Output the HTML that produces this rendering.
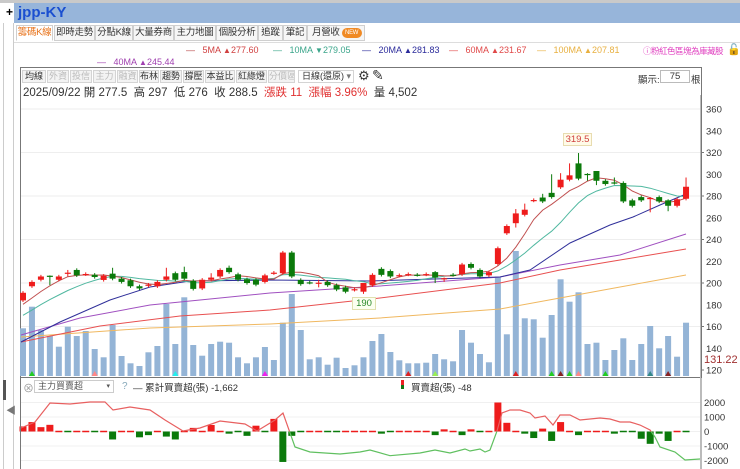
<!DOCTYPE html>
<html><head><meta charset="utf-8">
<style>
*{margin:0;padding:0;box-sizing:border-box}
body{width:740px;height:469px;overflow:hidden;background:#fff;font-family:"Liberation Sans","Noto Sans CJK TC",sans-serif;position:relative;color:#333}
.abs{position:absolute;white-space:nowrap}
.tab{position:absolute;top:25px;height:16px;border:1px solid #cfcfcf;background:#f6f6f6;font-size:9.5px;line-height:14px;color:#333;text-align:center;white-space:nowrap;overflow:hidden;letter-spacing:-0.3px}
.tb{position:absolute;top:70px;height:13px;border:1px solid #d4d4d4;background:#f3f3f3;font-size:9px;line-height:11px;text-align:center;color:#333;white-space:nowrap;overflow:hidden}
.tb.g{color:#bbb}
.leg{position:absolute;font-size:9px;white-space:nowrap}
</style></head><body>
<div class="abs" style="left:0;top:0;width:740px;height:3px;background:#c9c9c9"></div>
<div class="abs" style="left:14px;top:3px;width:726px;height:20px;background:#97b5da"></div>
<div class="abs" style="left:0;top:3px;width:14px;height:20px;background:#fff"></div>
<div class="abs" style="left:6px;top:5px;font-size:12px;font-weight:bold;color:#000">+</div>
<div class="abs" style="left:18px;top:4px;font-size:15px;font-weight:bold;color:#1a4fd0">jpp-KY</div>
<div class="abs" style="left:3px;top:23px;width:1px;height:446px;background:#ccc"></div>
<div class="abs" style="left:13px;top:23px;width:1px;height:446px;background:#ccc"></div>
<div class="abs" style="left:3px;top:380px;width:3px;height:20px;background:#555"></div>
<div class="abs" style="left:6px;top:402px;font-size:10px;color:#777">◀</div>

<div class="tab" style="left:16px;width:37px;background:#fff;color:#e8731a;border-bottom-color:#fff">籌碼K線</div>
<div class="tab" style="left:54px;width:41px">即時走勢</div>
<div class="tab" style="left:95px;width:38px">分點K線</div>
<div class="tab" style="left:133px;width:41px">大量券商</div>
<div class="tab" style="left:174px;width:42px">主力地圖</div>
<div class="tab" style="left:216px;width:42px">個股分析</div>
<div class="tab" style="left:258px;width:25px">追蹤</div>
<div class="tab" style="left:283px;width:24px">筆記</div>
<div class="tab" style="left:307px;width:58px;text-align:left;padding-left:4px">月營收<span style="display:inline-block;margin-left:2px;width:20px;height:10px;border-radius:5px;background:#f08a24;color:#fff;font-size:6px;line-height:10px;text-align:center;vertical-align:1px">NEW</span></div>
<div class="abs" style="left:14px;top:42px;width:726px;height:1px;background:#ddd"></div>

<div class="leg" style="left:186px;top:45px;color:#d04040"><span style="color:#b84a4a">—</span>&nbsp;&nbsp;&nbsp;5MA <span style="font-size:8px">▲</span>277.60</div>
<div class="leg" style="left:273px;top:45px;color:#3aa58a">—&nbsp;&nbsp;&nbsp;10MA <span style="font-size:8px">▼</span>279.05</div>
<div class="leg" style="left:362px;top:45px;color:#2b2b9b">—&nbsp;&nbsp;&nbsp;20MA <span style="font-size:8px">▲</span>281.83</div>
<div class="leg" style="left:449px;top:45px;color:#e04848">—&nbsp;&nbsp;&nbsp;60MA <span style="font-size:8px">▲</span>231.67</div>
<div class="leg" style="left:537px;top:45px;color:#e8b040">—&nbsp;&nbsp;&nbsp;100MA <span style="font-size:8px">▲</span>207.81</div>
<div class="leg" style="left:643px;top:45px;color:#e040c0;font-size:8.5px;letter-spacing:-0.5px">ⓘ粉紅色區塊為庫藏股</div>
<div class="leg" style="left:727px;top:43px;color:#000;font-size:11px">🔓</div>
<div class="leg" style="left:97px;top:57px;color:#a040b0">—&nbsp;&nbsp;&nbsp;40MA <span style="font-size:8px">▲</span>245.44</div>

<div class="abs" style="left:20px;top:67px;width:682px;height:311px;border:1px solid #777;border-bottom:none"></div>
<div class="tb" style="left:22px;width:24px">均線</div>
<div class="tb g" style="left:47px;width:22px">外資</div>
<div class="tb g" style="left:70px;width:22px">投信</div>
<div class="tb g" style="left:93px;width:23px">主力</div>
<div class="tb g" style="left:117px;width:21px">融資</div>
<div class="tb" style="left:139px;width:20px">布林</div>
<div class="tb" style="left:160px;width:22px">趨勢</div>
<div class="tb" style="left:183px;width:21px">撐壓</div>
<div class="tb" style="left:205px;width:30px">本益比</div>
<div class="tb" style="left:236px;width:31px">紅綠燈</div>
<div class="tb g" style="left:268px;width:27px">分價區</div>
<div class="tb" style="left:298px;width:56px;background:#fff;text-align:left;padding-left:3px">日線(還原) <span style="float:right;margin-right:2px;color:#777">▾</span></div>
<div class="abs" style="left:358px;top:68px;font-size:13px;color:#333">⚙</div>
<div class="abs" style="left:372px;top:67px;font-size:14px;color:#333">✎</div>
<div class="abs" style="left:638px;top:72px;font-size:9.5px;color:#333">顯示:</div>
<div class="abs" style="left:660px;top:70px;width:30px;height:13px;border:1px solid #bbb;font-size:9.5px;line-height:11px;text-align:center">75</div>
<div class="abs" style="left:691px;top:72px;font-size:9.5px;color:#333">根</div>
<div class="abs" style="left:23px;top:84px;font-size:11.5px;color:#333">2025/09/22 開 277.5&nbsp; 高 297&nbsp; 低 276&nbsp; 收 288.5&nbsp; <span style="color:#e03030">漲跌 11&nbsp; 漲幅 3.96%</span>&nbsp; 量 4,502</div>

<svg id="s" class="abs" style="left:0;top:0" width="740" height="469"></svg>

<div class="abs" style="left:20px;top:378px;width:1px;height:91px;background:#777"></div>
<div class="abs" style="left:20px;top:377px;width:680px;height:1px;background:#777"></div>
<div class="abs" style="left:23px;top:380px;font-size:11px;color:#999">⊗</div>
<div class="abs" style="left:34px;top:380px;width:80px;height:13px;border:1px solid #ccc;font-size:9px;line-height:11px;padding-left:3px;color:#555">主力買賣超<span style="float:right;margin-right:3px;font-size:7px">▾</span></div>
<div class="abs" style="left:122px;top:381px;font-size:10px;color:#8ab">?</div>
<div class="abs" style="left:133px;top:380px;font-size:9.5px;color:#333">—&nbsp;累計買賣超(張) -1,662</div>
<div class="abs" style="left:401px;top:380px;width:3px;height:5px;background:#e22"></div>
<div class="abs" style="left:401px;top:385px;width:3px;height:4px;background:#171"></div>
<div class="abs" style="left:411px;top:380px;font-size:9.5px;color:#333">買賣超(張) -48</div>

<div class="abs" style="left:563px;top:133px;width:29px;height:13px;background:#fffbe8;border:1px solid #e8dcb0;font-size:9.5px;line-height:11px;text-align:center;color:#d04040">319.5</div>
<div class="abs" style="left:352px;top:297px;width:24px;height:13px;background:#fcfff0;border:1px solid #e0e0b0;font-size:9.5px;line-height:11px;text-align:center;color:#2a8a2a">190</div>

<script>
var s=document.getElementById('s'),h='';
function X(i){return 23+i*8.96}
function Y(p){return 370-(p-120)*1.0875}
var d=[[184,191],[197,201],[203,206],[206.7,206.3,207,198],[203,206],[209,209.5,212,206],[212,207],[208,208.3],[207.6,205.5],[202.8,206.7],[208.6,204,214],[204,201],[202.5,197],[197,195],[197.5,198.5],[197,201],[203,206,214],[209,203],[210,204,215],[202,194.6],[195,203],[203,205,209],[206,212],[214,210,216],[208,203],[203.5,200],[203,198.5],[201,207],[209,209.5],[209,228],[228,206],[202.8,199],[200.6,200.3],[199.8,200.3,203,196],[201,198],[198,194],[196,192],[193.7,194.3],[192,200,200,190],[198,207.5],[213,207.5],[211,206],[206.8,207.2],[207.8,208.2],[207.6,207.4],[207.8,208.2],[210,205,211,200],[204,204.4,205,201],[207.6,207.4],[208,217],[217.5,214],[212,206],[207,210],[217.5,232],[245.7,252.4],[255,264,268,251],[262.7,267.4,273],[275.8,276.3],[278.6,275,282],[282.9,279,300],[288,295,301],[295,299,310],[310,296,319.5],[300.3,299.7,301,294],[303,294,303,290],[294,291],[292.5,292,297],[292,275],[276,271],[279,276],[277.7,278.2,279,265],[279,275],[276,271,277,266],[271,277],[277.5,288.5,297,276]];
var vt=[328.3,306.7,330,336,346.7,326.7,336,331,349,357.3,325,356,363.3,366,352.3,346,304,344,297.3,345,355.7,344,341.7,342.7,357.3,363.3,357.3,347,360,322.7,294,330,359.3,357.3,364.7,357.7,368,365.3,357.3,341,334,352,360.3,363.3,363.3,362.7,354,359.3,361.3,330,342.7,354,362.3,276.7,334.3,251,318.3,319.3,337.7,315,279.3,301.7,292.3,344,342.7,360,350,338.3,360,344,326,348.3,336,356.7,322.7];
[360,320,280,240,200,160].forEach(function(p){h+='<line x1="21" x2="700" y1="'+Y(p)+'" y2="'+Y(p)+'" stroke="#eee"/>'});
for(var p=120;p<=360;p+=20)h+='<text x="706" y="'+(Y(p)+3.5)+'" font-size="9.5" fill="#333">'+p+'</text>';
h+='<line x1="701" x2="701" y1="95" y2="469" stroke="#777"/>';
for(var k=0;k<6;k++){h+='<line x1="701" x2="704" y1="'+Y(120+k*40)+'" y2="'+Y(120+k*40)+'" stroke="#777"/>'}
h+='<text x="704" y="363" font-size="11" fill="#a03030">131.22</text>';
vt.forEach(function(t,i){h+='<rect x="'+(X(i)-3)+'" y="'+t+'" width="6" height="'+(376-t)+'" fill="#94b4d6"/>'});
var tri=[[1,'#2c2'],[8,'#f88'],[17,'#2ee'],[27,'#e2e'],[43,'#d22'],[46,'#9e5'],[55,'#d22'],[59,'#2c2'],[60,'#822'],[61,'#2c2'],[62,'#f88'],[65,'#2c2'],[70,'#388'],[72,'#822']];
tri.forEach(function(t){var x=X(t[0]);h+='<polygon points="'+(x-3)+',376 '+(x+3)+',376 '+x+',371" fill="'+t[1]+'"/>'});
var cl=[150,153,156,160,164,168,172,176,180,183].concat(d.map(function(a){return a[1]}));
function ma(n,col){var pts=[];for(var i=0;i<75;i++){var sm=0;for(var j=0;j<n;j++)sm+=cl[i+10-j];pts.push(X(i)+','+Y(sm/n).toFixed(1))}h+='<polyline points="'+pts.join(' ')+'" fill="none" stroke="'+col+'" stroke-width="1"/>'}
function pl(p,col){h+='<polyline points="'+p+'" fill="none" stroke="'+col+'" stroke-width="1"/>'}
pl('21,337 150,328 270,324 380,318 500,309 560,298 620,287 686,275','#f0b860');
pl('21,342 100,326 180,316 270,310 380,298 500,283 560,270 620,260 686,249','#e85050');
pl('21,335 80,318 150,305 270,293 380,286 500,277 560,265 620,255 686,234','#a050c0');
pl('21,342 60,322 110,300 150,287 190,281 270,280 370,281 500,277 530,270 570,243 610,225 633,217 660,205 686,194','#30309a');
ma(10,'#50b8a0');ma(5,'#c05050');
d.forEach(function(a,i){var o=a[0],c=a[1],hi=a[2]||Math.max(o,c)+1.5,lo=a[3]||Math.min(o,c)-1.5;var col=c>=o?'#ee1c1c':'#0b7a0b';var x=X(i);var t=Y(Math.max(o,c)),b=Y(Math.min(o,c));if(b-t<1.2)b=t+1.2;h+='<line x1="'+x+'" x2="'+x+'" y1="'+Y(hi)+'" y2="'+Y(lo)+'" stroke="'+col+'"/><rect x="'+(x-3)+'" y="'+t+'" width="6" height="'+(b-t)+'" fill="'+col+'"/>'});
var Z=431.5;function V(v){return Z-v*0.0145}
[2000,1000,0,-1000,-2000].forEach(function(v){h+='<text x="704" y="'+(V(v)+3.5)+'" font-size="9.5" fill="#333">'+v+'</text>';h+='<line x1="21" x2="700" y1="'+V(v)+'" y2="'+V(v)+'" stroke="#f0f0f0"/>'});
var bv=[350,650,300,460,40,-40,100,40,-40,100,-550,100,40,-400,-250,40,-350,-550,40,250,40,450,40,-150,-100,-300,400,-40,870,-2100,-300,-100,100,40,-100,-40,40,100,40,100,-150,-100,40,40,40,40,-250,150,40,-250,150,-100,40,2000,600,40,-150,-450,200,-650,650,40,-250,40,40,40,-150,-40,-40,-500,-850,-150,-650,100,-48];
bv.forEach(function(v,i){var x=X(i),col=v>=0?'#ee1c1c':'#0b7a0b';var y1=Math.min(V(v),Z),hh=Math.abs(V(v)-Z);if(hh<1.5){hh=1.5;y1=Z-0.75}h+='<rect x="'+(x-3.5)+'" y="'+y1+'" width="7" height="'+hh+'" fill="'+col+'"/>'});
var cp='21,428 35,422 50,403 70,404 90,402 105,402 113,410 130,407 150,410 165,420 183,431 200,428 220,421 245,424 257,431 275,420 283,413 295,447 310,452 340,454 360,452 370,450 390,455.7 420,453 435,450 450,453 465,449 470,451 480,449 485,452 490,450 497,431 502,413 510,410 520,410 530,413 535,418 545,416 553,425 560,415 570,415 580,420 600,418 610,419 620,422 630,422 640,425 650,430 655,437 660,447 675,452 685,460 700,459';
h+='<defs><clipPath id="up"><rect x="0" y="0" width="740" height="'+Z+'"/></clipPath><clipPath id="dn"><rect x="0" y="'+Z+'" width="740" height="60"/></clipPath></defs>';
h+='<polyline points="'+cp+'" fill="none" stroke="#e86060" stroke-width="1.2" clip-path="url(#up)"/>';
h+='<polyline points="'+cp+'" fill="none" stroke="#60c060" stroke-width="1.2" clip-path="url(#dn)"/>';
s.innerHTML=h;
</script>
</body></html>
